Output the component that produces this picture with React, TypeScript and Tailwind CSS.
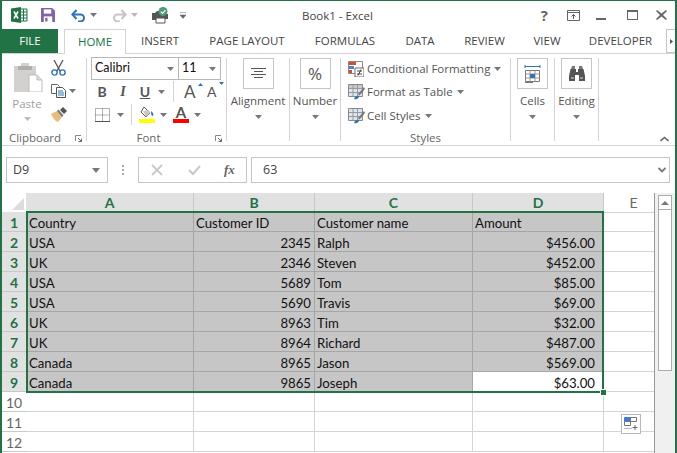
import type { ReactNode } from 'react';

const ui = 'font-["Open_Sans",sans-serif]';
const cellFont = 'font-["Lato",sans-serif]';

function Caret({ className = '' }: { className?: string }) {
  return (
    <svg width="7" height="4" viewBox="0 0 7 4" className={`shrink-0 ${className}`}>
      <path d="M0 0h7L3.5 4z" fill="#777" />
    </svg>
  );
}

function ExcelLogo() {
  return (
    <svg width="17" height="16" viewBox="0 0 17 16">
      <path d="M9 2h7v12H9z" fill="#fff" stroke="#217346" />
      <path d="M9 5h7M9 8h7M9 11h7M12.5 2v12" stroke="#217346" />
      <path d="M0 1.5 10 0v16L0 14.5z" fill="#217346" />
      <path d="M3 4.5l4 7M7 4.5l-4 7" stroke="#fff" strokeWidth="1.6" />
    </svg>
  );
}

function SaveIcon() {
  return (
    <svg width="14" height="14" viewBox="0 0 15 15">
      <path d="M0 0h12l3 3v12H0z" fill="#8064a8" />
      <path d="M3 1.5h8v4.5H3z" fill="#fff" />
      <path d="M3 9h9v6H3z" fill="#fff" />
      <path d="M4.5 10.5h2.5v4H4.5z" fill="#8064a8" />
    </svg>
  );
}

function UndoIcon({ color }: { color: string }) {
  return (
    <svg width="15" height="13" viewBox="0 0 15 13" fill="none">
      <path d="M1 5.5h8.5a3.5 3.5 0 0 1 0 7H7" stroke={color} strokeWidth="2" />
      <path d="M5.5 1L1.4 5.5 5.5 10" stroke={color} strokeWidth="2" />
    </svg>
  );
}

function RedoIcon() {
  return (
    <svg width="15" height="13" viewBox="0 0 15 13" fill="none">
      <path d="M14 5.5H5.5a3.5 3.5 0 0 0 0 7H8" stroke="#c4c4c4" strokeWidth="2" />
      <path d="M9.5 1l4.1 4.5L9.5 10" stroke="#c4c4c4" strokeWidth="2" />
    </svg>
  );
}

function PrintCheckIcon() {
  return (
    <svg width="17" height="17" viewBox="0 0 17 17">
      <path d="M0 6h3l2-2h4v9H0z" fill="#555" />
      <path d="M4 11h9v5H4z" fill="#fff" stroke="#555" />
      <path d="M9 7h7v5h-3v-1H9z" fill="#555" />
      <circle cx="11" cy="4.5" r="4.5" fill="#4c9a78" />
      <path d="M8.8 4.6l1.7 1.7 2.9-3.2" stroke="#fff" fill="none" strokeWidth="1.2" />
    </svg>
  );
}

function PasteIcon() {
  return (
    <svg width="29" height="30" viewBox="0 0 29 30" className="ml-[2px]">
      <path d="M0 4h7V1h8v3h7v26H0z" fill="#d3d0d0" />
      <path d="M4 4h14v4H4z" fill="#b2aeae" />
      <path d="M15 13h8l5 5v12H15z" fill="#fff" stroke="#bbb" />
      <path d="M23 13v5h5" fill="#ddd" stroke="#bbb" />
    </svg>
  );
}

function ScissorsIcon() {
  return (
    <svg width="15" height="16" viewBox="0 0 15 16" fill="none">
      <path d="M3 0l6 11M12 0L6 11" stroke="#555" strokeWidth="1.3" />
      <circle cx="3.5" cy="12.5" r="2.6" stroke="#2f74b5" strokeWidth="1.4" />
      <circle cx="11.5" cy="12.5" r="2.6" stroke="#2f74b5" strokeWidth="1.4" />
    </svg>
  );
}

function CopyIcon() {
  return (
    <svg width="15" height="14" viewBox="0 0 15 14" fill="none">
      <path d="M.5.5h6l2 2V3M.5.5v9H5" stroke="#666" />
      <path d="M5.5 3.5h6l3 3v7h-9z" fill="#fff" stroke="#555" />
      <path d="M7 7h5M7 9h6M7 11h6" stroke="#2f74b5" />
    </svg>
  );
}

function BrushIcon() {
  return (
    <svg width="16" height="15" viewBox="0 0 16 15">
      <path d="M0 7l6-3 5 6-4 5C4 14 2 11 0 7z" fill="#e8bd78" />
      <path d="M6 4l5 6 1.5-1.5-5-6z" fill="#777" />
      <path d="M9 3l3-3 4 4-3 3z" fill="#555" />
    </svg>
  );
}

function BordersIcon() {
  return (
    <svg width="15" height="14" viewBox="0 0 15 14" fill="none">
      <path d="M.5.5h14v13H.5zM7.5.5v13M.5 7h14" stroke="#666" strokeDasharray="1 1" />
      <path d="M0 13.5h15" stroke="#555" />
    </svg>
  );
}

function FillIcon() {
  return (
    <svg width="16" height="17" viewBox="0 0 16 17">
      <path d="M5 1l6 6-4 4-5-5z" fill="#fff" stroke="#555" />
      <path d="M4 5l6-1 1 3-4 4z" fill="#c9c9c9" />
      <path d="M12 5c2 2 3 3 2 5-2 0-2-3-2-5z" fill="#2f74b5" />
      <path d="M0 13h16v4H0z" fill="#ffff00" />
    </svg>
  );
}

function FontColorIcon() {
  return (
    <div className={`relative w-[16px] h-[17px] ${cellFont}`}>
      <span className="block text-center text-[15px] leading-[13px] font-bold text-[#555]">A</span>
      <div className="absolute left-0 bottom-0 w-[16px] h-[4px] bg-[#ff0000]" />
    </div>
  );
}

function AlignIcon() {
  return (
    <svg width="15" height="11" viewBox="0 0 15 11">
      <path d="M0 .5h15M3 3.5h9M0 6.5h15M3 9.5h9" stroke="#555" />
    </svg>
  );
}

function CondFormatIcon() {
  return (
    <svg width="16" height="16" viewBox="0 0 16 16">
      <path d="M.5.5h14v12H.5z" fill="#fff" stroke="#888" />
      <path d="M1 1h7v3H1z" fill="#d2502d" />
      <path d="M1 5h5v3H1z" fill="#4a86c8" />
      <path d="M1 9h3v3H1z" fill="#d2502d" />
      <path d="M7 7h9v9H7z" fill="#fff" stroke="#666" />
      <path d="M9 10h5M9 13h5M13 8.500l-3 6" stroke="#444" />
    </svg>
  );
}

function TableIcon({ tint }: { tint: string }) {
  return (
    <svg width="17" height="16" viewBox="0 0 17 16">
      <path d="M.5.500h14v12H.5z" fill="#fff" stroke="#888" />
      <path d="M1 1h13v3H1z" fill={tint} />
      <path d="M1 5h13v7H1z" fill="#dce6f1" />
      <path d="M5 1v12M9.500 1v12M1 4.500h13M1 8.500h13" stroke="#999" />
      <path d="M16 3l-6 7 1.500 1.500L17 5z" fill="#777" />
      <path d="M6 15c1-3 3-4 5-3 0 2-2 4-5 3z" fill="#2f74b5" />
    </svg>
  );
}

function CellsIcon() {
  return (
    <svg width="17" height="20" viewBox="0 0 17 20">
      <path d="M1 2.500h15M1 1v3M16 1v3M5 2.500h7" stroke="#2f74b5" />
      <path d="M1.500 6.500h14v11h-14z" fill="#fff" stroke="#777" />
      <path d="M6 6.500v11M11 6.500v11M1.500 10h14M1.500 14h14" stroke="#999" />
      <path d="M6 10h5v4H6z" fill="#2f74b5" />
      <path d="M1 18.500h8" stroke="#777" />
    </svg>
  );
}

function BinocularsIcon() {
  return (
    <svg width="16" height="15" viewBox="0 0 16 15">
      <path d="M2 3l1-3h3v3zM10 3V0h3l1 3z" fill="#777" />
      <path d="M1.500 3H7v3h2V3h5.500L16 10v5H10V9H6v6H0v-5z" fill="#555" />
      <path d="M2 11h3v2H2zM11 11h3v2h-3z" fill="#999" />
    </svg>
  );
}

function Launcher() {
  return (
    <svg width="7" height="7" viewBox="0 0 7 7" fill="none">
      <path d="M.5 6V.5H6" stroke="#888" />
      <path d="M3 3l3.500 3.500M6.500 3.500v3h-3" stroke="#666" />
    </svg>
  );
}

function GroupLabel({ children, launcher, className = '' }: { children: ReactNode; launcher?: boolean; className?: string }) {
  return (
    <div className={`mt-auto -mb-[2px] h-[10px] flex items-center justify-center relative text-[11.5px] leading-[12px] text-[#666] ${className}`}>
      {children}
      {launcher && (
        <span className="absolute right-[4px] top-[2px]">
          <Launcher />
        </span>
      )}
    </div>
  );
}

function BigButton({ label, children }: { label: string; children: ReactNode }) {
  return (
    <div className="flex flex-col items-center h-full">
      <div className="w-[31px] h-[31px] border border-[#c6c6c6] flex items-center justify-center">{children}</div>
      <div className="mt-[4px] text-[11.5px] leading-[16px] text-[#555] whitespace-nowrap">{label}</div>
      <Caret className="mt-[6px]" />
    </div>
  );
}

function StyleRow({ icon, label, height }: { icon: ReactNode; label: string; height: string }) {
  return (
    <div className={`flex items-center ${height}`}>
      <span className="w-[19px] shrink-0">{icon}</span>
      <span className="text-[11.5px] text-[#555] whitespace-nowrap">{label}</span>
      <Caret className="ml-[4px]" />
    </div>
  );
}

const tabs = [
  { label: 'INSERT', width: 'w-[68px]' },
  { label: 'PAGE LAYOUT', width: 'w-[106px]' },
  { label: 'FORMULAS', width: 'w-[90px]' },
  { label: 'DATA', width: 'w-[60px]' },
  { label: 'REVIEW', width: 'w-[69px]' },
  { label: 'VIEW', width: 'w-[56px]' },
  { label: 'DEVELOPER', width: 'w-[91px]' },
];

const rows: [string, string, string, string][] = [
  ['USA', '2345', 'Ralph', '$456.00'],
  ['UK', '2346', 'Steven', '$452.00'],
  ['USA', '5689', 'Tom', '$85.00'],
  ['USA', '5690', 'Travis', '$69.00'],
  ['UK', '8963', 'Tim', '$32.00'],
  ['UK', '8964', 'Richard', '$487.00'],
  ['Canada', '8965', 'Jason', '$569.00'],
  ['Canada', '9865', 'Joseph', '$63.00'],
];

const selCell = 'h-[20px] bg-[#c6c6c6] border-r border-b border-[#a6a6a6] text-[13.2px] leading-[22px] text-[#111] whitespace-nowrap overflow-hidden';

function RowHead({ n, active }: { n: number; active?: boolean }) {
  return (
    <div
      className={`h-[20px] flex items-center justify-center border-b pt-[2px] text-[14px] ${
        active
          ? 'bg-[#e1e1e1] border-[#c8c8c8] text-[#217346] font-bold'
          : 'bg-white border-[#c8c8c8] text-[#666]'
      }`}
    >
      {n}
    </div>
  );
}

function ColHead({ children, active, className = '' }: { children: ReactNode; active?: boolean; className?: string }) {
  return (
    <div
      className={`h-[19px] flex items-center justify-center text-[14px] border-r ${className} ${
        active
          ? 'bg-[#e1e1e1] border-[#c8c8c8] text-[#217346] font-bold'
          : 'bg-white border-white text-[#666]'
      }`}
    >
      {children}
    </div>
  );
}

function EmptyRow({ n }: { n: number }) {
  return (
    <>
      <RowHead n={n} />
      <div className="h-[20px] border-r border-b border-[#d4d4d4]" />
      <div className="h-[20px] border-r border-b border-[#d4d4d4]" />
      <div className="h-[20px] border-r border-b border-[#d4d4d4]" />
      <div className="h-[20px] border-r border-b border-[#d4d4d4]" />
      <div className="h-[20px] border-b border-[#d4d4d4]" />
    </>
  );
}

export default function App() {
  return (
    <div className={`w-[677px] h-[453px] overflow-hidden bg-white border-t border-x-2 border-[#217346] flex flex-col ${ui}`}>
      {/* title bar */}
      <div className="h-[28px] shrink-0 flex items-center relative text-[#555]">
        <span className="ml-[9px]"><ExcelLogo /></span>
        <span className="ml-[13px]"><SaveIcon /></span>
        <span className="ml-[16px]"><UndoIcon color="#2f74b5" /></span>
        <Caret className="ml-[4px]" />
        <span className="ml-[15px]"><RedoIcon /></span>
        <Caret className="ml-[4px] opacity-50" />
        <span className="ml-[14px]"><PrintCheckIcon /></span>
        <svg width="6" height="7" viewBox="0 0 6 7" className="ml-[11px]">
          <path d="M0 .5h6M0 3h6l-3 3.500z" fill="#666" stroke="#666" strokeWidth="0.5" />
        </svg>
        <div className="absolute left-[300px] top-[7px] text-[11.5px] leading-[16px] text-[#444]">Book1 - Excel</div>
        <div className="ml-auto flex items-center mr-[8px]">
          <span className="text-[15px] font-bold leading-none text-[#666] mr-[19px]">?</span>
          <svg width="13" height="11" viewBox="0 0 13 11" fill="none" className="mr-[16px]">
            <path d="M.5.500h12v10H.5zM1 2.500h11" stroke="#666" />
            <path d="M6.500 9V4.500M4.500 6.500l2-2 2 2" stroke="#555" />
          </svg>
          <span className="w-[10px] h-[2px] bg-[#666] mt-[7px] mr-[21px]" />
          <span className="w-[11px] h-[10px] border border-[#666] border-t-2 mr-[18px]" />
          <svg width="11" height="10" viewBox="0 0 11 10">
            <path d="M1 0l4.500 3.500L10 0l1 1-4 4 4 4-1 1-4.500-3.500L1 10 0 9l4-4-4-4z" fill="#666" />
          </svg>
        </div>
      </div>

      {/* ribbon tabs */}
      <div className="h-[25px] shrink-0 flex items-stretch border-b border-[#d4d4d4] text-[11.5px] text-[#444]">
        <div className="w-[58px] -ml-[2px] pl-[2px] h-[24px] bg-[#217346] text-white flex items-center justify-center">FILE</div>
        <div className="ml-[6px] w-[62px] h-[25px] bg-white border border-b-0 border-[#d4d4d4] text-[#217346] flex items-center justify-center">HOME</div>
        {tabs.map((tab) => (
          <div key={tab.label} className={`${tab.width} h-[24px] flex items-center justify-center whitespace-nowrap`}>
            {tab.label}
          </div>
        ))}
        <div className="ml-auto w-[10px] mr-[-1px] h-[24px] border border-[#c6c6c6] flex items-center justify-center">
          <svg width="3" height="5" viewBox="0 0 3 5"><path d="M0 0l3 2.500L0 5z" fill="#555" /></svg>
        </div>
      </div>

      {/* ribbon */}
      <div className="h-[92px] shrink-0 flex py-[4px] border-b border-[#d4d4d4]">
        <div className="w-[85px] shrink-0 flex flex-col border-r border-[#d4d4d4]">
          <div className="flex">
            <div className="w-[49px] pl-[1px] pt-[4px] flex flex-col items-center">
              <PasteIcon />
              <div className="mt-[4px] text-[11.5px] leading-[16px] text-[#a0a0a0]">Paste</div>
              <Caret className="mt-[5px] opacity-50" />
            </div>
            <div className="pt-[2px] flex flex-col">
              <ScissorsIcon />
              <div className="mt-[8px] flex items-center"><CopyIcon /><Caret className="ml-[3px]" /></div>
              <div className="mt-[9px]"><BrushIcon /></div>
            </div>
          </div>
          <GroupLabel launcher className="pr-[18px]">Clipboard</GroupLabel>
        </div>

        <div className="w-[140px] shrink-0 flex flex-col border-r border-[#d4d4d4] pl-[4px]">
          <div className="flex">
            <div className={`w-[88px] h-[23px] -mt-[1px] border border-[#b8b8b8] flex items-center justify-between pl-[3px] pr-[4px] text-[12.500px] text-[#111] ${cellFont}`}>
              Calibri<Caret />
            </div>
            <div className={`w-[43px] h-[23px] -mt-[1px] -ml-[1px] border border-[#b8b8b8] flex items-center justify-between pl-[3px] pr-[4px] text-[12.500px] text-[#111] ${cellFont}`}>
              11<Caret />
            </div>
          </div>
          <div className="h-[23px] flex items-center text-[#555]">
            <span className={`ml-[4px] w-[14px] text-center text-[14px] font-bold ${cellFont}`}>B</span>
            <span className="ml-[7px] w-[14px] text-center text-[14px] italic font-['Liberation_Serif',serif] font-bold">I</span>
            <span className={`ml-[8px] w-[14px] text-center text-[14px] font-bold underline ${cellFont}`}>U</span>
            <Caret className="ml-[6px]" />
            <span className="ml-[8px] w-px h-[21px] bg-[#d4d4d4]" />
            <span className={`ml-[10px] w-[16px] relative text-[17px] leading-none ${cellFont}`}>
              A
              <svg width="5" height="3" viewBox="0 0 5 3" className="absolute right-[-3px] top-0"><path d="M0 3l2.500-3L5 3z" fill="#2f74b5" /></svg>
            </span>
            <span className={`ml-[7px] w-[14px] relative text-[14px] leading-none ${cellFont}`}>
              A
              <svg width="5" height="3" viewBox="0 0 5 3" className="absolute right-[-3px] -top-[3px]"><path d="M0 0l2.500 3L5 0z" fill="#2f74b5" /></svg>
            </span>
          </div>
          <div className="h-[23px] flex items-center">
            <span className="ml-[4px]"><BordersIcon /></span>
            <Caret className="ml-[7px]" />
            <span className="ml-[7px] w-px h-[21px] bg-[#d4d4d4]" />
            <span className="ml-[7px]"><FillIcon /></span>
            <Caret className="ml-[5px]" />
            <span className="ml-[6px]"><FontColorIcon /></span>
            <Caret className="ml-[5px]" />
          </div>
          <GroupLabel launcher className="pr-[20px]">Font</GroupLabel>
        </div>

        <div className="w-[63px] shrink-0 border-r border-[#d4d4d4]">
          <BigButton label="Alignment"><AlignIcon /></BigButton>
        </div>
        <div className="w-[51px] shrink-0 border-r border-[#d4d4d4]">
          <BigButton label="Number"><span className="text-[17px] text-[#555]">%</span></BigButton>
        </div>

        <div className="w-[170px] shrink-0 flex flex-col border-r border-[#d4d4d4] pl-[7px]">
          <StyleRow icon={<CondFormatIcon />} label="Conditional Formatting" height="h-[22px]" />
          <StyleRow icon={<TableIcon tint="#c9c9c9" />} label="Format as Table" height="h-[23px]" />
          <StyleRow icon={<TableIcon tint="#dce6f1" />} label="Cell Styles" height="h-[25px]" />
          <GroupLabel className="pr-[7px]">Styles</GroupLabel>
        </div>

        <div className="w-[44px] shrink-0 border-r border-[#d4d4d4]">
          <BigButton label="Cells"><CellsIcon /></BigButton>
        </div>
        <div className="w-[44px] shrink-0 border-r border-[#d4d4d4]">
          <BigButton label="Editing"><BinocularsIcon /></BigButton>
        </div>
        <div className="flex-1 flex items-end justify-end pr-[6px]">
          <svg width="9" height="6" viewBox="0 0 9 6" fill="none" className="-mb-[1px]">
            <path d="M.5 5l4-3.500 4 3.500" stroke="#666" strokeWidth="1.600" />
          </svg>
        </div>
      </div>

      {/* formula bar */}
      <div className="h-[47px] shrink-0 flex items-start pt-[11px] text-[12.500px] text-[#444]">
        <div className="ml-[4px] w-[102px] h-[26px] border border-[#c6c6c6] flex items-center justify-between pl-[6px] pr-[7px]">
          D9
          <svg width="8" height="5" viewBox="0 0 8 5"><path d="M0 0h8L4 5z" fill="#777" /></svg>
        </div>
        <div className="ml-[14px] w-[2px] h-[10px] mt-[8px] border-l-2 border-dotted border-[#aaa]" />
        <div className="ml-[14px] w-[109px] h-[26px] border border-[#c6c6c6] flex items-center">
          <svg width="12" height="12" viewBox="0 0 12 12" className="ml-[12px]"><path d="M1 1l10 10M11 1L1 11" stroke="#c8c8c8" strokeWidth="1.800" /></svg>
          <svg width="13" height="11" viewBox="0 0 13 11" fill="none" className="ml-[25px]"><path d="M1 5l4 4 7-8" stroke="#c8c8c8" strokeWidth="2" /></svg>
          <span className="ml-[23px] text-[13px] italic font-bold text-[#666] font-['Liberation_Serif',serif]">fx</span>
        </div>
        <div className="ml-[4px] flex-1 mr-[5px] h-[26px] border border-[#c6c6c6] flex items-center justify-between pl-[11px] pr-[3px]">
          63
          <svg width="8" height="6" viewBox="0 0 8 6" fill="none"><path d="M.5 1L4 4.500 7.500 1" stroke="#777" strokeWidth="1.800" /></svg>
        </div>
      </div>

      {/* worksheet */}
      <div className={`flex-1 flex min-h-0 ${cellFont}`}>
        <div className="w-[653px] shrink-0 relative border-r border-[#9a9a9a]">
          <div className="grid grid-cols-[24px_168px_121px_158px_131px_50px]">
            <div className="h-[19px] bg-white flex items-end justify-end pr-[2px] pb-[2px]">
              <svg width="12" height="12" viewBox="0 0 12 12"><path d="M12 0v12H0z" fill="#dcdcdc" /></svg>
            </div>
            <ColHead active>A</ColHead>
            <ColHead active>B</ColHead>
            <ColHead active>C</ColHead>
            <ColHead active>D</ColHead>
            <ColHead className="pl-[10px]">E</ColHead>

            <RowHead n={1} active />
            <div className={`${selCell} pl-[3px]`}>Country</div>
            <div className={`${selCell} pl-[2px]`}>Customer ID</div>
            <div className={`${selCell} pl-[2px]`}>Customer name</div>
            <div className={`${selCell} pl-[2px]`}>Amount</div>
            <div className="h-[20px] border-t border-b border-[#d4d4d4]" />

            {rows.map((row, i) => {
              const last = i === rows.length - 1;
              return [
                <RowHead key={`h${i}`} n={i + 2} active />,
                <div key={`a${i}`} className={`${selCell} pl-[3px]`}>{row[0]}</div>,
                <div key={`b${i}`} className={`${selCell} text-right pr-[3px]`}>{row[1]}</div>,
                <div key={`c${i}`} className={`${selCell} pl-[2px]`}>{row[2]}</div>,
                <div
                  key={`d${i}`}
                  className={last
                    ? 'h-[20px] bg-white pr-[9px] text-right text-[13.2px] leading-[22px] text-[#111]'
                    : `${selCell} text-right pr-[8px]`}
                >
                  {row[3]}
                </div>,
                <div key={`e${i}`} className="h-[20px] border-b border-[#d4d4d4]" />,
              ];
            })}

            <EmptyRow n={10} />
            <EmptyRow n={11} />
            <EmptyRow n={12} />
          </div>

          {/* selection outline over the range */}
          <div className="absolute left-[24px] top-[18px] w-[578px] h-[182px] border-2 border-[#217346] pointer-events-none" />
          <div className="absolute left-[598px] top-[196px] w-[7px] h-[7px] bg-[#217346] border border-white" />

          {/* quick analysis button */}
          <div className="absolute left-[619px] top-[221px] w-[20px] h-[20px] border border-[#b8b8b8] bg-white flex items-center justify-center">
            <svg width="14" height="14" viewBox="0 0 14 14" fill="none">
              <path d="M.5.500h6v4h-6z" fill="#3b78e7" stroke="#3b78e7" />
              <path d="M6.500.500h6v4h-6zM.500 4.500h6v4h-6z" stroke="#777" />
              <path d="M.5 11.500h7" stroke="#777" strokeDasharray="1 1" />
              <path d="M11 8v5M8.500 10.500h5" stroke="#666" />
            </svg>
          </div>
        </div>

        {/* vertical scrollbar */}
        <div className="flex-1 bg-[#f0f0f0] pt-[2px] pl-[3px] pr-[1px]">
          <div className="w-[14px] h-[15px] bg-white border border-[#ababab] flex items-center justify-center">
            <svg width="8" height="4" viewBox="0 0 8 4"><path d="M0 4l4-4 4 4z" fill="#777" /></svg>
          </div>
          <div className="w-[14px] h-[161px] bg-white border border-t-0 border-[#ababab]" />
        </div>
      </div>
    </div>
  );
}
